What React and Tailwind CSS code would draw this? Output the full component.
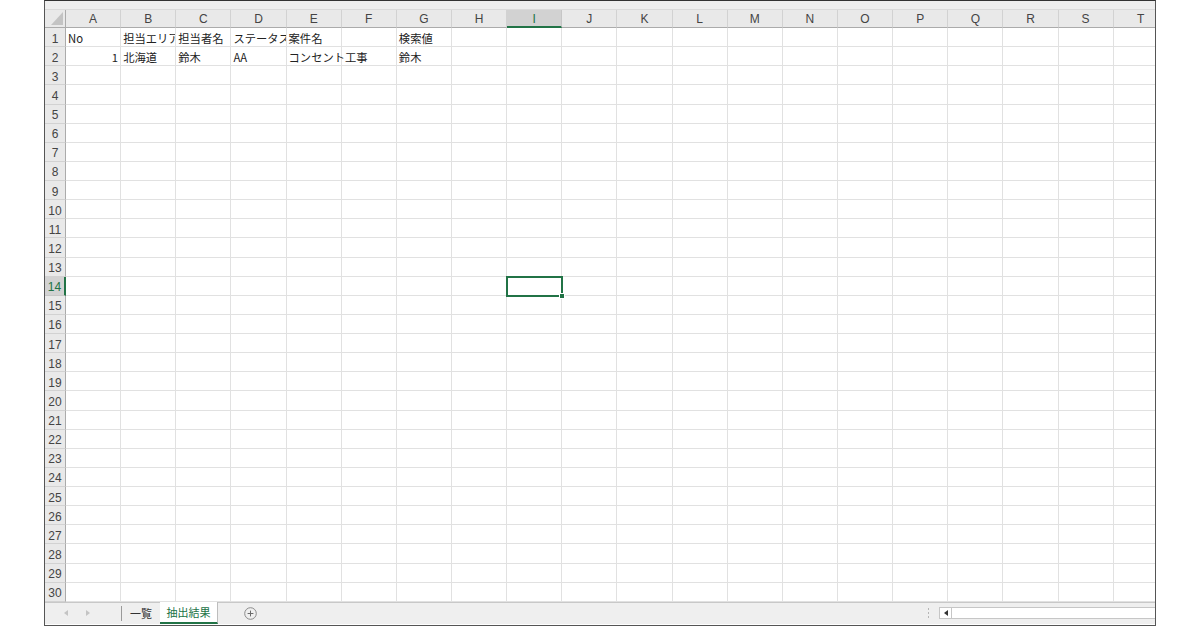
import React from 'react'

// Column letters A..T; the last one is clipped by the frame
const COLS = 'ABCDEFGHIJKLMNOPQRST'.split('')
const ROWS = Array.from({ length: 30 }, (_, i) => i + 1)

// Cell contents. overflow: text runs into the empty cell to the right, otherwise it is cut at the edge
const DATA = {
  1: {
    A: { t: 'No' },
    B: { t: '担当エリア' },
    C: { t: '担当者名' },
    D: { t: 'ステータス' },
    E: { t: '案件名' },
    G: { t: '検索値' },
  },
  2: {
    A: { t: '1', right: true },
    B: { t: '北海道' },
    C: { t: '鈴木' },
    D: { t: 'AA' },
    E: { t: 'コンセント工事', overflow: true },
    G: { t: '鈴木' },
  },
}

const SEL_COL = 'I'
const SEL_ROW = 14

function ColumnHeader() {
  return (
    <div className="flex h-[18px] shrink-0">
      {/* corner with select-all triangle */}
      <div className="relative w-[21px] shrink-0 bg-[#e9e9e9] border-r border-b border-[#ababab]">
        <svg className="absolute right-[2px] bottom-[2px]" width="12" height="13" viewBox="0 0 12 13">
          <polygon points="12,0 12,13 0,13" fill="#c3c3c3" />
        </svg>
      </div>
      {COLS.map(c => {
        const sel = c === SEL_COL
        return (
          <div
            key={c}
            className={`w-[55.15px] shrink-0 flex items-center justify-center pt-[1px] text-[12px] font-['Liberation_Sans',sans-serif] border-r ${
              sel
                ? 'bg-[#d2d2d2] text-[#217346] border-[#c6c6c6] border-b-2 border-b-[#217346]'
                : 'bg-[#e9e9e9] text-[#444] border-[#d2d2d2] border-b border-b-[#ababab]'
            }`}
          >
            {c}
          </div>
        )
      })}
    </div>
  )
}

function Cell({ col, row }) {
  const d = DATA[row]?.[col]
  const sel = col === SEL_COL && row === SEL_ROW
  return (
    <div
      className={`relative w-[55.15px] shrink-0 border-r border-b border-[#e1e1e1] ${
        d?.overflow || sel ? 'overflow-visible z-10' : 'overflow-hidden'
      }`}
    >
      {d && (
        <div
          className={`h-full flex items-center whitespace-nowrap px-[2px] pt-[2px] text-[11.3px] text-[#222] font-['Noto_Sans_CJK_JP',sans-serif] ${
            d.right ? 'justify-end' : ''
          }`}
        >
          {d.t}
        </div>
      )}
      {sel && (
        <div className="absolute -left-px -top-px -right-[2px] -bottom-[2px] border-2 border-[#217346]">
          <div className="absolute -right-[4px] -bottom-[4px] w-[6px] h-[6px] bg-[#217346] border border-white" />
        </div>
      )}
    </div>
  )
}

function Row({ row }) {
  const sel = row === SEL_ROW
  return (
    <div className="flex h-[19.14px] shrink-0">
      <div
        className={`w-[21px] shrink-0 flex items-center justify-center pt-[3px] text-[12px] font-['Liberation_Sans',sans-serif] border-b ${
          sel
            ? 'bg-[#d2d2d2] text-[#217346] border-[#c6c6c6] border-r-2 border-r-[#217346]'
            : 'bg-[#e9e9e9] text-[#444] border-[#d2d2d2] border-r border-r-[#ababab]'
        }`}
      >
        {row}
      </div>
      {COLS.map(c => (
        <Cell key={c} col={c} row={row} />
      ))}
    </div>
  )
}

function SheetTabs() {
  return (
    <div className="flex items-stretch h-[22px] shrink-0 bg-[#efefef] border-t border-[#c8c8c8] text-[11px] font-['Noto_Sans_CJK_JP',sans-serif]">
      {/* tab scroll arrows */}
      <div className="w-[76px] shrink-0 flex items-center pl-[19px] gap-[18px]">
        <svg width="4" height="6" viewBox="0 0 4 6"><polygon points="4,0 4,6 0,3" fill="#c4c4c4" /></svg>
        <svg width="4" height="6" viewBox="0 0 4 6"><polygon points="0,0 0,6 4,3" fill="#c4c4c4" /></svg>
      </div>
      <div className="w-px my-[3px] bg-[#9a9a9a]" />
      <div className="px-[8px] flex items-center text-[#333]">一覧</div>
      <div className="w-[58px] bg-white flex items-center justify-center text-[#217346] border-b-2 border-[#217346] border-r border-r-[#bdbdbd] -mt-px">
        抽出結果
      </div>
      <div className="ml-[26px] flex items-center">
        <svg width="13" height="13" viewBox="0 0 13 13">
          <circle cx="6.5" cy="6.5" r="5.8" fill="none" stroke="#8a8a8a" strokeWidth="1" />
          <path d="M6.5 3.6v5.8M3.6 6.5h5.8" stroke="#6a6a6a" strokeWidth="1" />
        </svg>
      </div>
      <div className="flex-1" />
      {/* split handle */}
      <div className="flex flex-col justify-center gap-[2px] mr-[10px]">
        <span className="w-px h-[2px] bg-[#b5b5b5]" />
        <span className="w-px h-[2px] bg-[#b5b5b5]" />
        <span className="w-px h-[2px] bg-[#b5b5b5]" />
      </div>
      {/* horizontal scrollbar */}
      <div className="w-[216px] flex items-center">
        <div className="flex-1 h-[12px] flex bg-white border border-[#c6c6c6] border-r-0">
          <div className="w-[12px] flex items-center justify-center border-r border-[#c6c6c6]">
            <svg width="4" height="6" viewBox="0 0 4 6"><polygon points="4,0 4,6 0,3" fill="#333" /></svg>
          </div>
        </div>
      </div>
    </div>
  )
}

export default function App() {
  return (
    <div className="w-[1200px] h-[630px] bg-white">
      <div className="ml-[44px] w-[1112px] h-[626px] flex flex-col overflow-hidden border-t border-x border-b border-[#555] border-t-[#333] bg-white">
        {/* strip left of the formula bar */}
        <div className="h-[9px] shrink-0 bg-[#eeeeee] border-b border-[#dadada]" />
        <ColumnHeader />
        {ROWS.map(r => (
          <Row key={r} row={r} />
        ))}
        <SheetTabs />
      </div>
    </div>
  )
}
